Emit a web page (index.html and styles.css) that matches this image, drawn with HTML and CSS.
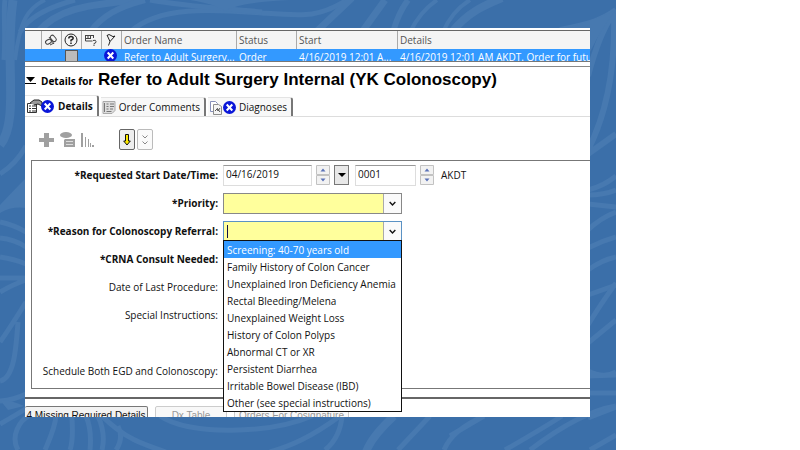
FILE: index.html
```html
<!DOCTYPE html>
<html lang="en">
<head>
    <meta charset="UTF-8">
    <meta name="viewport" content="width=device-width, initial-scale=1.0">
    <title>Order Details</title>
    <link rel="stylesheet" href="styles.css">
</head>
<body>
    <svg width="0" height="0" class="defs">
        <symbol id="missing" viewBox="0 0 13 13">
            <circle cx="6.5" cy="6.5" r="6.5" fill="#0a16d8"/>
            <path d="M3.7 3.5l5.6 6M9.3 3.5l-5.6 6" stroke="#fff" stroke-width="2"/>
        </symbol>
        <symbol id="spin" viewBox="0 0 14 20">
            <path d="M.5.5h13v9H.5zM.5 10.500h13v9H.5z" fill="#f2f2f2" stroke="#c2c2c2"/>
            <path d="M4.500 6.500L7 3.500l2.500 3zM4.500 13.500L7 16.500l2.500-3z" fill="#5a72b8"/>
        </symbol>
    </svg>
    <div class="slide">
        <svg class="swirls" viewBox="0 0 616 450" preserveAspectRatio="none">
            <g fill="none" stroke="#4779b0" stroke-width="5">
                <path d="M5 0C3 14 6 30 4 60"/>
                <path d="M13 0C4 60 20 120 0 145" stroke-width="9"/>
                <path d="M45 0C28 8 20 20 15 60" stroke-width="4"/>
                <path d="M75 0C45 8 28 18 20 32"/>
                <path d="M38 32C60 6 95 5 135 0" stroke-width="7"/>
                <path d="M90 32C102 16 118 7 145 0" stroke-width="6"/>
                <path d="M130 32C160 4 220 10 262 13S320 18 350-2"/>
                <path d="M150 0C190 7 225 8 262 12"/>
                <path d="M316 32L352-2M362 32L385 0" stroke-width="7"/>
                <path d="M393 32C397 18 402 8 408 0" stroke-width="6"/>
                <path d="M410 32C418 16 428 6 437 0M443 32C450 16 460 6 470 0" stroke-width="4"/>
                <path d="M452 32C468 12 485 5 502-2" stroke-width="8"/>
                <path d="M0 174Q16 164 26 146M0 222Q14 225 26 232M0 238Q14 239 26 247M0 257Q14 259 26 264M0 278H26M0 292Q14 284 26 280"/>
                <path d="M0 342Q10 328 26 302M18 322C16 350 14 378 0 381M0 401Q14 400 26 394M0 424Q16 415 27 408"/>
                <path d="M18 450C10 436 20 420 29 416M45 450C50 438 55 428 56 416M70 450C74 438 72 428 72 416M90 450Q92 430 86 416M102 450Q106 434 98 416"/>
                <path d="M102 416C124 438 142 444 166 452M116 450Q124 438 118 426M160 416C190 436 270 434 312 416M270 452C290 446 310 438 340 416M325 450Q340 438 342 416"/>
                <path d="M366 452Q372 436 394 416" stroke-width="8"/>
                <path d="M398 450L430 416M444 450Q452 430 484 416M450 436Q470 424 484 416"/>
                <path d="M505 450Q540 430 562 416M530 450Q580 412 616 406M590 450L616 435"/>
                <path d="M560 30C590 24 603 20 616 10M588 76Q600 30 616 10M588 150Q616 95 614 15M588 154L616 134" stroke-width="6"/>
                <path d="M588 190Q604 186 616 176M588 195Q604 195 616 190M588 204L616 207M588 230Q600 218 616 212M588 248Q602 241 616 237M588 270Q602 260 616 257M588 295L616 285"/>
                <path d="M588 325Q600 305 616 283M588 343L616 320M588 371Q604 379 616 372M588 376L616 375M588 393L616 393M588 418L616 407"/>
            </g>
            <path d="M190 0h100Q240 2 225 11Q215 4 190 0zM0 205Q14 190 26 178V208Q12 206 0 213zM560 30Q600 18 616 10Q604 24 590 52V30zM0 400Q12 400 24 406L8 410z" fill="#4779b0"/>
        </svg>

        <main class="window">
            <div class="orders">
                <table>
                    <colgroup>
                        <col class="c-blank"><col class="c-icon"><col class="c-icon"><col class="c-icon"><col class="c-icon">
                        <col class="c-name"><col class="c-status"><col class="c-start"><col>
                    </colgroup>
                    <thead>
                        <tr>
                            <th></th>
                            <th><svg width="14" height="14" viewBox="0 0 14 14" fill="none" stroke="#444"><rect x="1.500" y="7" width="6" height="4" rx="2" transform="rotate(-30 4 9)"/><rect x="7" y="2" width="4" height="7" rx="2" transform="rotate(-40 9 5)"/><path d="M5 4l5 7M6 12l4-2"/></svg></th>
                            <th><svg width="14" height="14" viewBox="0 0 14 14" fill="none" stroke="#222"><circle cx="7" cy="7" r="6"/><path d="M4.800 5.500q0-2 2.200-2t2.200 1.800q0 1-2.200 2v1.200M7 9.500v1.500" stroke-width="1.500"/></svg></th>
                            <th><svg width="14" height="14" viewBox="0 0 14 14" fill="none" stroke="#444"><path d="M1.500 2v6h7M1 2.500h9M4 2v4M6.500 2v4M9.500 2v3M2 5.500h5M9 7.500q3-1 3 1t-2 2v1M10 12v1"/></svg></th>
                            <th><svg width="14" height="14" viewBox="0 0 14 14" fill="none" stroke="#222"><path d="M4.500 12.500L6 8.500M3 2l3 6.500 5-5.500q-2 1.500-4-.500T3 2.500"/></svg></th>
                            <th>Order Name</th>
                            <th>Status</th>
                            <th>Start</th>
                            <th>Details</th>
                        </tr>
                    </thead>
                    <tbody>
                        <tr>
                            <td></td>
                            <td></td>
                            <td><span class="gray-box"></span></td>
                            <td></td>
                            <td><svg width="13" height="13"><use href="#missing"/></svg></td>
                            <td>Refer to Adult Surgery...</td>
                            <td>Order</td>
                            <td>4/16/2019 12:01 A...</td>
                            <td>4/16/2019 12:01 AM AKDT. Order for future</td>
                        </tr>
                    </tbody>
                </table>
            </div>

            <div class="title">
                <svg width="11" height="8" viewBox="0 0 11 8"><path d="M1 0h9L5.500 5z"/><path d="M0 6h11v1H0z"/></svg>
                <span class="small">Details for</span>
                <h1>Refer to Adult Surgery Internal (YK Colonoscopy)</h1>
            </div>

            <nav class="tabs">
                <button class="tab active">
                    <svg width="29" height="15" viewBox="0 0 29 15"><path d="M1.500 4.500h9v9h-9z" fill="#fff" stroke="#333"/><path d="M3 7h2M6 7h4M3 9.500h2M6 9.500h4M3 12h2M6 12h4" stroke="#333"/><path d="M4 4l4-3h5l3 2v4l-4-2-4 1" fill="#999" stroke="#222"/><use href="#missing" x="15" y="1" width="13" height="13"/></svg>
                    Details
                </button>
                <button class="tab">
                    <svg width="14" height="15" viewBox="0 0 14 15"><path d="M1 1.500h12v9l-3 3H1z" fill="#ddd" stroke="#aaa"/><path d="M2.500 3v9M4.500 4h2M8 4h4M4.500 6.500h2M8 6.500h4M4.500 9h2M8 9h3M4.500 11.500h5" stroke="#777"/></svg>
                    Order Comments
                </button>
                <button class="tab">
                    <svg width="27" height="15" viewBox="0 0 27 15"><path d="M1.500 1.500h5l2 2v8h-7z" fill="#fff" stroke="#8790bb"/><path d="M4.500 4.500h5l3 2v8h-8z" fill="#f4f4f4" stroke="#8d8d8d"/><path d="M6 11l2-2 1 2 2-3M8 8l3 4" stroke="#555" fill="none"/><use href="#missing" x="14" y="1" width="13" height="13"/></svg>
                    Diagnoses
                </button>
            </nav>

            <div class="toolbar">
                <svg width="56" height="18" viewBox="0 0 56 18" fill="#a0a0a0">
                    <path d="M5 2h5v5h5v4h-5v5H5v-5H0V7h5z"/>
                    <ellipse cx="27" cy="4" rx="6" ry="3"/><path d="M26 8h10v8H25V9z"/><path d="M27 10.500h7M27 13.500h7" stroke="#ddd"/>
                    <path d="M42 2h2v14h-2zM46 6h1v10h-1zM49 8h1v8h-1zM51 12h1v4h-1zM53 14h2v2h-2z"/>
                </svg>
                <button class="tool" aria-label="Next"><svg width="8" height="12" viewBox="0 0 8 12"><path d="M2.500.5h3v6.500h1.800L4 11 .7 7h1.800z" fill="#ffeb00" stroke="#111"/></svg></button>
                <button class="tool off" aria-label="More"><svg width="8" height="12" viewBox="0 0 8 12" fill="none" stroke="#888"><path d="M1.500 1.500L4 4l2.500-2.500M1.500 7.500L4 10l2.500-2.500"/></svg></button>
            </div>

            <form class="fields">
                <label class="required" for="date">*Requested Start Date/Time:</label>
                <div class="datetime">
                    <input type="text" id="date" class="date" value="04/16/2019">
                    <button type="button" class="spin" aria-label="Change date"><svg width="14" height="20"><use href="#spin"/></svg></button>
                    <button type="button" class="calendar" aria-label="Calendar"><svg width="8" height="4" viewBox="0 0 8 4"><path d="M0 0h8L4 4z"/></svg></button>
                    <input type="text" class="time" value="0001" aria-label="Time">
                    <button type="button" class="spin" aria-label="Change time"><svg width="14" height="20"><use href="#spin"/></svg></button>
                    <span class="zone">AKDT</span>
                </div>

                <label class="required" for="priority">*Priority:</label>
                <div class="combo">
                    <select id="priority"><option></option></select>
                    <svg class="arrow" width="18" height="18" viewBox="0 0 18 18"><path d="M6 7.500l3 3 3-3" fill="none" stroke="#111" stroke-width="1.500"/></svg>
                </div>

                <label class="required" for="reason">*Reason for Colonoscopy Referral:</label>
                <div class="combo open">
                    <input type="text" id="reason">
                    <svg class="arrow" width="18" height="18" viewBox="0 0 18 18"><path d="M6 7.500l3 3 3-3" fill="none" stroke="#111" stroke-width="1.500"/></svg>
                    <select class="list" size="10" aria-label="Reasons">
                        <option selected>Screening: 40-70 years old</option>
                        <option>Family History of Colon Cancer</option>
                        <option>Unexplained Iron Deficiency Anemia</option>
                        <option>Rectal Bleeding/Melena</option>
                        <option>Unexplained Weight Loss</option>
                        <option>History of Colon Polyps</option>
                        <option>Abnormal CT or XR</option>
                        <option>Persistent Diarrhea</option>
                        <option>Irritable Bowel Disease (IBD)</option>
                        <option>Other (see special instructions)</option>
                    </select>
                </div>

                <span class="label required">*CRNA Consult Needed:</span>
                <span class="label">Date of Last Procedure:</span>
                <span class="label tall">Special Instructions:</span>
                <span class="label">Schedule Both EGD and Colonoscopy:</span>
            </form>

            <div class="footer">
                <button class="missing">4 Missing Required Details</button>
                <button class="dx" disabled>Dx Table</button>
                <button class="cosign" disabled>Orders For Cosignature</button>
            </div>
        </main>
    </div>
</body>
</html>
```
FILE: styles.css
```css
* {
    box-sizing: border-box;
}

body {
    margin: 0;
    background: #fff;
    color: #111;
    font: 10px/16px "Open Sans", "Noto Sans", sans-serif;
}

button, input, select {
    font: inherit;
    color: inherit;
    margin: 0;
    padding: 0;
    border-radius: 0;
    outline: none;
}

svg {
    display: block;
    flex: none;
}

.defs {
    position: absolute;
}

.slide {
    position: relative;
    width: 77%;
    min-height: 100vh;
    padding: 28px 26px 33px 25px;
    background: #3b6fa9;
}

.swirls {
    position: absolute;
    left: 0;
    top: 0;
    width: 100%;
    height: 100%;
}

.window {
    position: relative;
    background: #fff;
    padding-top: 2px;
    overflow: hidden;
}

/* orders list */
.orders {
    height: 32px;
    border-top: 1px solid #666;
    border-bottom: 1px solid #777;
    overflow: hidden;
}

table {
    width: 100%;
    table-layout: fixed;
    border-collapse: separate;
    border-spacing: 0;
}

.c-blank { width: 17px; }
.c-icon { width: 20px; }
.c-name { width: 115px; }
.c-status { width: 60px; }
.c-start { width: 101px; }

th, td {
    height: 18px;
    padding: 0 2px;
    text-align: left;
    font-weight: normal;
    white-space: nowrap;
    overflow: hidden;
}

th {
    background: #f4f4f4;
    color: #555;
    border-right: 1px solid #aaa;
}

th:last-child {
    border-right: none;
}

td {
    vertical-align: top;
    background: #3399ff;
    color: #fff;
}

.gray-box {
    display: block;
    width: 13px;
    height: 14px;
    margin: 1px 0 0 1px;
    background: #bbb;
    border: 1px solid #555;
}

/* title */
.title {
    display: flex;
    align-items: baseline;
    gap: 5px;
    height: 34px;
    margin-top: 4px;
    padding-top: 1px;
    border-top: 1px solid #888;
    color: #000;
    white-space: nowrap;
}

.title .small,
.required,
.tab.active {
    font-weight: bold;
}

h1 {
    margin: 0;
    font: bold 17px/24px "Liberation Sans", Arial, sans-serif;
}

/* tabs */
.tabs {
    display: flex;
    align-items: flex-end;
    gap: 2px;
    height: 17px;
    border-bottom: 1px solid #ddd;
}

.tab {
    display: flex;
    align-items: center;
    gap: 3px;
    height: 19px;
    padding: 0 4px 0 1px;
    background: #f8f8f8;
    border: none;
    border-top: 1px solid #e4e4e4;
    border-right: 2px solid #777;
    border-top-right-radius: 3px;
    white-space: nowrap;
}

.tab.active {
    height: 21px;
    background: #fff;
}

/* toolbar */
.toolbar {
    display: flex;
    align-items: center;
    gap: 2px;
    height: 43px;
    padding: 2px 0 0 14px;
}

.tool {
    display: flex;
    align-items: center;
    justify-content: center;
    width: 16px;
    height: 21px;
    background: #eee;
    border: 1px solid #666;
    border-radius: 2px;
}

.toolbar svg + .tool {
    margin-left: 22px;
}

.tool.off {
    background: #fafafa;
    border-color: #bbb;
}

/* order form */
.fields {
    display: grid;
    grid-template-columns: 186px 1fr;
    grid-auto-rows: 28px;
    align-items: center;
    column-gap: 5px;
    height: 229px;
    margin-left: 6px;
    border: 1px solid #777;
    border-right: none;
}

.fields label, .label {
    grid-column: 1;
    text-align: right;
    white-space: nowrap;
}

.label.tall {
    height: 44px;
    grid-row: span 2;
}

.datetime {
    display: flex;
    align-items: center;
    white-space: nowrap;
}

.datetime input {
    height: 21px;
    padding: 0 2px 3px;
    border: 1px solid #ddd;
    border-top-color: #999;
    background: #fff;
}

.date {
    width: 89px;
}

.time {
    width: 61px;
    margin-left: 6px;
}

.spin {
    margin-left: 4px;
    border: none;
    background: none;
}

.calendar {
    display: flex;
    align-items: center;
    justify-content: center;
    width: 15px;
    height: 20px;
    margin-left: 4px;
    background: #e8e8e8;
    border: 1px solid #777;
}

.zone {
    margin-left: 7px;
}

.combo {
    position: relative;
    width: 179px;
    height: 21px;
}

.combo > input,
.combo > select:not(.list) {
    display: block;
    width: 100%;
    height: 21px;
    padding: 0 22px 0 4px;
    appearance: none;
    background: #ffff9c;
    border: 1px solid #888;
}

.combo.open > input {
    border-color: #5b92c4;
}

/* text cursor */
.combo.open::before {
    content: "";
    position: absolute;
    left: 4px;
    top: 4px;
    width: 1px;
    height: 13px;
    background: #114;
}

.arrow {
    position: absolute;
    right: 1px;
    top: 1px;
    height: 19px;
    background: #fafafa;
    border-left: 1px solid #aaa;
    pointer-events: none;
}

.list {
    position: absolute;
    z-index: 1;
    left: 0;
    top: 19px;
    width: 100%;
    height: 172px;
    background: #fff;
    border: 1px solid #111;
    overflow: hidden;
}

.list option {
    height: 17px;
    min-height: 17px;
    padding: 2px 3px 0;
    line-height: 15px;
}

.list option:checked {
    background: #3399ff linear-gradient(#3399ff, #3399ff);
    color: #fff;
}

/* footer */
.footer {
    display: flex;
    gap: 7px;
    height: 20px;
    margin-top: 8px;
    padding-top: 7px;
    border-top: 2px solid #666;
    overflow: hidden;
}

.footer button {
    flex: none;
    height: 20px;
    border: 1px solid #777;
    border-radius: 2px;
    background: #f2f2f2;
    font: 10px/16px "Liberation Sans", Arial, sans-serif;
    white-space: nowrap;
}

.footer button:disabled {
    color: #999;
    border-color: #ccc;
    background: #f8f8f8;
}

.footer .missing {
    width: 123px;
    border-left: none;
}

.dx {
    width: 72px;
}

.cosign {
    width: 115px;
}
```
